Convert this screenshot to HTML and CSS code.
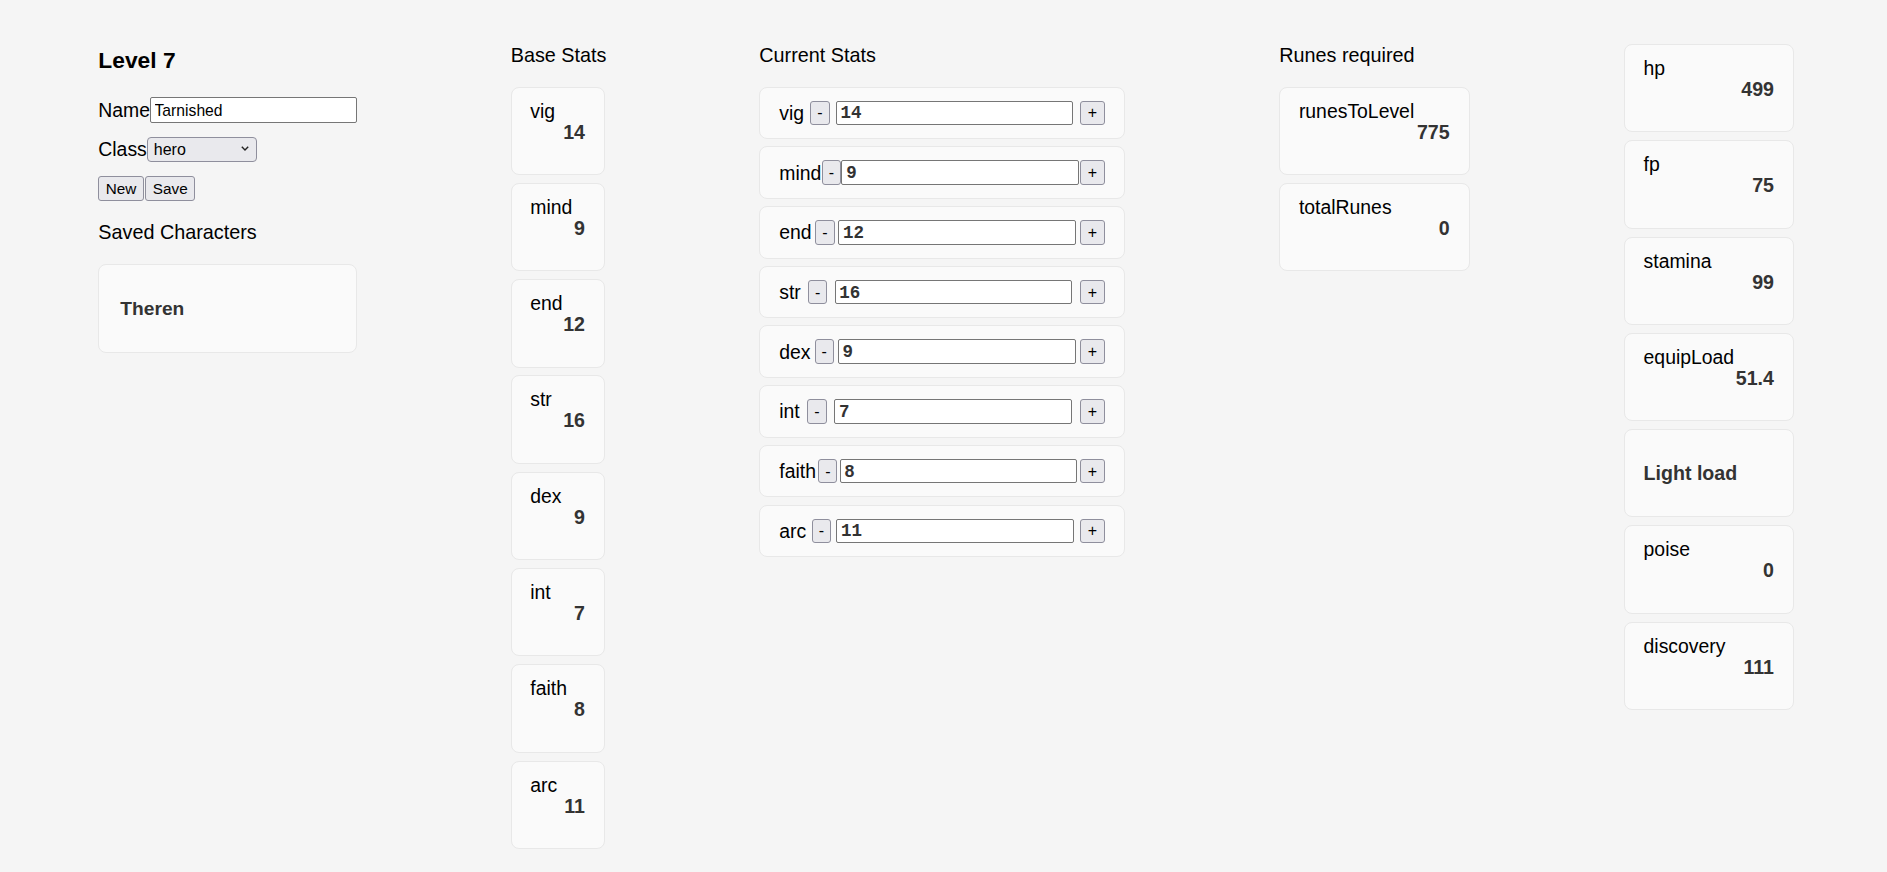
FILE: index.html
```html
<!DOCTYPE html>
<html lang="en">
<head>
<meta charset="utf-8">
<title>Character Planner</title>
<link rel="stylesheet" href="styles.css">
</head>
<body>
<main class="app">
  <section class="col col-char">
    <h1 class="level">Level 7</h1>
    <div class="field field-name"><label class="field-label" for="name">Name</label><input id="name" class="text-input" type="text" value="Tarnished"></div>
    <div class="field"><label class="field-label" for="cls">Class</label><span class="select-wrap"><select id="cls" class="select"><option>hero</option></select><svg class="chev" viewBox="0 0 8 5" aria-hidden="true"><path d="M0.8 0.8 L4 4 L7.2 0.8" fill="none" stroke="#222" stroke-width="1.4"/></svg></span></div>
    <div class="actions"><button class="btn" type="button">New</button><button class="btn" type="button">Save</button></div>
    <h2 class="col-title saved-title">Saved Characters</h2>
    <div class="card card-center"><span>Theren</span></div>
  </section>

  <section class="col col-base">
    <h2 class="col-title">Base Stats</h2>
    <div class="stack">
      <div class="card stat"><div class="stat-label">vig</div><div class="stat-value">14</div></div>
      <div class="card stat"><div class="stat-label">mind</div><div class="stat-value">9</div></div>
      <div class="card stat"><div class="stat-label">end</div><div class="stat-value">12</div></div>
      <div class="card stat"><div class="stat-label">str</div><div class="stat-value">16</div></div>
      <div class="card stat"><div class="stat-label">dex</div><div class="stat-value">9</div></div>
      <div class="card stat"><div class="stat-label">int</div><div class="stat-value">7</div></div>
      <div class="card stat"><div class="stat-label">faith</div><div class="stat-value">8</div></div>
      <div class="card stat"><div class="stat-label">arc</div><div class="stat-value">11</div></div>
    </div>
  </section>

  <section class="col col-current">
    <h2 class="col-title">Current Stats</h2>
    <div class="rows">
      <div class="card row"><span class="row-label">vig</span><button class="step step-minus" type="button">-</button><input class="num-input" type="text" value="14"><button class="step step-plus" type="button">+</button></div>
      <div class="card row"><span class="row-label">mind</span><button class="step step-minus" type="button">-</button><input class="num-input" type="text" value="9"><button class="step step-plus" type="button">+</button></div>
      <div class="card row"><span class="row-label">end</span><button class="step step-minus" type="button">-</button><input class="num-input" type="text" value="12"><button class="step step-plus" type="button">+</button></div>
      <div class="card row"><span class="row-label">str</span><button class="step step-minus" type="button">-</button><input class="num-input" type="text" value="16"><button class="step step-plus" type="button">+</button></div>
      <div class="card row"><span class="row-label">dex</span><button class="step step-minus" type="button">-</button><input class="num-input" type="text" value="9"><button class="step step-plus" type="button">+</button></div>
      <div class="card row"><span class="row-label">int</span><button class="step step-minus" type="button">-</button><input class="num-input" type="text" value="7"><button class="step step-plus" type="button">+</button></div>
      <div class="card row"><span class="row-label">faith</span><button class="step step-minus" type="button">-</button><input class="num-input" type="text" value="8"><button class="step step-plus" type="button">+</button></div>
      <div class="card row"><span class="row-label">arc</span><button class="step step-minus" type="button">-</button><input class="num-input" type="text" value="11"><button class="step step-plus" type="button">+</button></div>
    </div>
  </section>

  <section class="col col-runes">
    <h2 class="col-title">Runes required</h2>
    <div class="stack">
      <div class="card stat"><div class="stat-label">runesToLevel</div><div class="stat-value">775</div></div>
      <div class="card stat"><div class="stat-label">totalRunes</div><div class="stat-value">0</div></div>
    </div>
  </section>

  <section class="col col-derived">
    <div class="stack">
      <div class="card stat"><div class="stat-label">hp</div><div class="stat-value">499</div></div>
      <div class="card stat"><div class="stat-label">fp</div><div class="stat-value">75</div></div>
      <div class="card stat"><div class="stat-label">stamina</div><div class="stat-value">99</div></div>
      <div class="card stat"><div class="stat-label">equipLoad</div><div class="stat-value">51.4</div></div>
      <div class="card stat stat-center"><span>Light load</span></div>
      <div class="card stat"><div class="stat-label">poise</div><div class="stat-value">0</div></div>
      <div class="card stat"><div class="stat-label">discovery</div><div class="stat-value">111</div></div>
    </div>
  </section>
</main>
</body>
</html>
```

FILE: styles.css
```css
* {
  box-sizing: border-box;
}

html,
body {
  margin: 0;
}

body {
  background: #f5f5f5;
  color: #000;
  font-family: "Liberation Sans", Arial, sans-serif;
  font-size: 19.4px;
  line-height: 22px;
}

.app {
  display: flex;
  align-items: flex-start;
  gap: 154px;
  padding: 44px 0 0 98.3px;
}

.col {
  flex: none;
}

.col-char { width: 258.4px; }
.col-base { width: 94.6px; }
.col-current { width: 366px; }
.col-runes { width: 190.7px; }
.col-derived { width: 170.3px; }

/* character column */
.level {
  margin: 2px 0 0;
  font-size: 22.8px;
  line-height: 28px;
  font-weight: 700;
}

.field {
  display: flex;
  align-items: center;
  margin-top: 14px;
}

.field-name {
  margin-top: 23.3px;
}

.field-label {
  font-size: 19.4px;
  line-height: 22px;
}

.text-input {
  flex: 1;
  min-width: 0;
  height: 25.4px;
  margin: 0;
  padding: 3px 3.5px 0;
  border: 1px solid #767676;
  border-radius: 2px;
  background: #fff;
  color: #000;
  font: 15.7px "Liberation Sans", Arial, sans-serif;
}

.select-wrap {
  position: relative;
  display: inline-flex;
}

.select {
  -webkit-appearance: none;
  appearance: none;
  width: 110px;
  height: 25px;
  margin: 0;
  padding: 1px 0 0 6px;
  border: 1px solid #8f8f9d;
  border-radius: 4px;
  background: #e9e9ed;
  color: #000;
  font: 16px "Liberation Sans", Arial, sans-serif;
}

.chev {
  position: absolute;
  right: 7.6px;
  top: 9.5px;
  width: 8px;
  height: 5px;
  pointer-events: none;
}

.actions {
  display: flex;
  gap: 1.4px;
  margin-top: 14px;
}

.btn {
  height: 25px;
  margin: 0;
  padding: 1px 6.5px 0;
  border: 1px solid #8f8f9d;
  border-radius: 3px;
  background: #e9e9ed;
  color: #000;
  font: 15.3px "Liberation Sans", Arial, sans-serif;
}

.col-title {
  margin: 0 0 19.95px;
  font-size: 19.8px;
  line-height: 22.75px;
  font-weight: 400;
  white-space: nowrap;
}

.saved-title {
  margin: 20.4px 0 20.45px;
}

/* cards */
.card {
  background: #fafafa;
  border: 1px solid #e8e8e8;
  border-radius: 8px;
}

.card-center {
  display: flex;
  align-items: center;
  height: 89px;
  padding: 0 21px;
  color: #333;
  font-size: 19.2px;
  font-weight: 700;
}

.stack {
  display: flex;
  flex-direction: column;
  gap: 7.97px;
}

.stat {
  height: 88.3px;
  padding: 12px 19.3px 0 18.6px;
}

.stat-label {
  line-height: 22px;
  white-space: nowrap;
}

.stat-value {
  color: #333;
  font-size: 19.6px;
  line-height: 20px;
  font-weight: 700;
  text-align: right;
}

.stat-center {
  display: flex;
  align-items: center;
  padding-top: 0;
  color: #333;
  font-size: 19.6px;
  font-weight: 700;
}

/* current stat rows */
.rows {
  display: flex;
  flex-direction: column;
  gap: 7.1px;
}

.row {
  display: flex;
  align-items: center;
  justify-content: space-between;
  height: 52.6px;
  padding: 0 19px;
}

.row-label {
  line-height: 22px;
}

.step {
  flex: none;
  height: 24.6px;
  margin: 0;
  padding: 1px 0 0;
  border: 1px solid #8f8f9d;
  border-radius: 3px;
  background: #e9e9ed;
  color: #000;
  font: 16px "Liberation Sans", Arial, sans-serif;
}

.step-minus { width: 19.3px; }
.step-plus { width: 25.7px; }

.num-input {
  flex: none;
  width: 237.7px;
  height: 24.6px;
  margin: 0;
  padding: 1px 3.7px 0;
  border: 1px solid #767676;
  border-radius: 2px;
  background: #fff;
  color: #333;
  font: 700 17.5px "Liberation Mono", "Courier New", monospace;
}
```
